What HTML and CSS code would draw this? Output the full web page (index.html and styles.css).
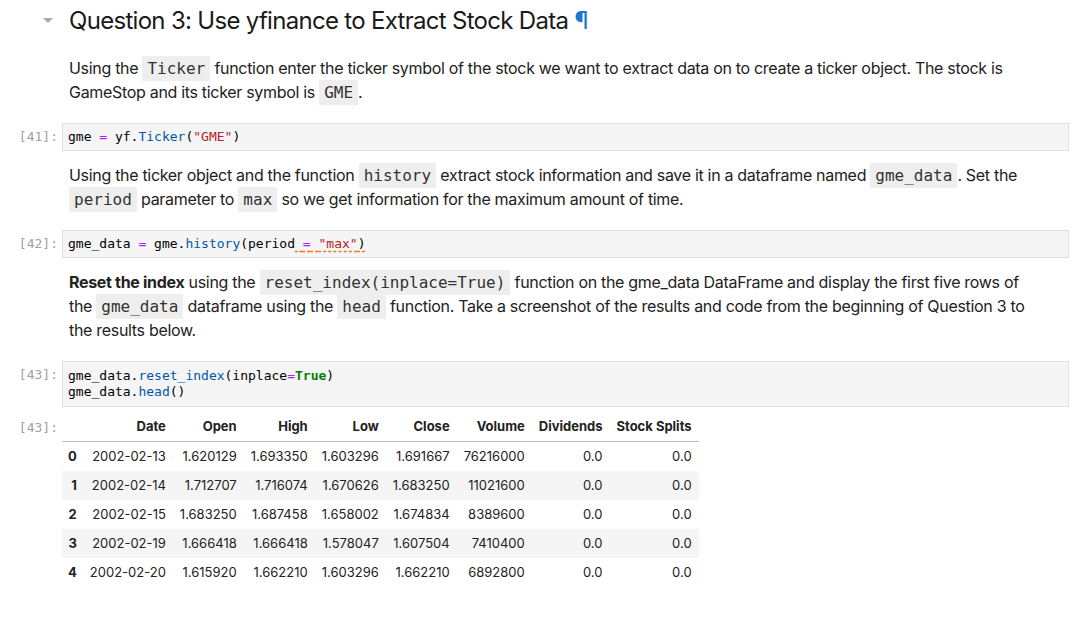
FILE: index.html
```html
<!DOCTYPE html>
<html>
<head>
<meta charset="utf-8">
<link rel="stylesheet" href="styles.css">
</head>
<body>
<div class="notebook">
  <div class="cell md heading-cell">
    <div class="prompt"><span class="caret"></span></div>
    <div class="md-body">
      <h2>Question 3: Use yfinance to Extract Stock Data <span class="anchor">¶</span></h2>
    </div>
  </div>

  <div class="cell md">
    <div class="prompt"></div>
    <div class="md-body">
      <p>Using the <code>Ticker</code> function enter the ticker symbol of the stock we want to extract data on to create a ticker object. The stock is GameStop and its ticker symbol is <code>GME</code>.</p>
    </div>
  </div>

  <div class="cell code">
    <div class="prompt">[41]:</div>
    <div class="input"><pre>gme <span class="o">=</span> yf.<span class="f">Ticker</span>(<span class="s">"GME"</span>)</pre></div>
  </div>

  <div class="cell md">
    <div class="prompt"></div>
    <div class="md-body">
      <p>Using the ticker object and the function <code>history</code> extract stock information and save it in a dataframe named <code>gme_data</code>. Set the <code>period</code> parameter to <code>max</code> so we get information for the maximum amount of time.</p>
    </div>
  </div>

  <div class="cell code">
    <div class="prompt">[42]:</div>
    <div class="input"><pre>gme_data <span class="o">=</span> gme.<span class="f">history</span>(period<span class="lint"> <span class="o">=</span> <span class="s">"max"</span>)</span></pre></div>
  </div>

  <div class="cell md">
    <div class="prompt"></div>
    <div class="md-body">
      <p><b>Reset the index</b> using the <code>reset_index(inplace=True)</code> function on the gme_data DataFrame and display the first five rows of the <code>gme_data</code> dataframe using the <code>head</code> function. Take a screenshot of the results and code from the beginning of Question 3 to the results below.</p>
    </div>
  </div>

  <div class="cell code">
    <div class="prompt">[43]:</div>
    <div class="input tall"><pre>gme_data.<span class="f">reset_index</span>(inplace<span class="o">=</span><span class="k">True</span>)
gme_data.<span class="f">head</span>()</pre></div>
  </div>

  <div class="cell output">
    <div class="prompt">[43]:</div>
    <div class="out-body">
      <table class="df">
        <thead>
          <tr><th></th><th>Date</th><th>Open</th><th>High</th><th>Low</th><th>Close</th><th>Volume</th><th>Dividends</th><th>Stock Splits</th></tr>
        </thead>
        <tbody>
          <tr><th>0</th><td>2002-02-13</td><td>1.620129</td><td>1.693350</td><td>1.603296</td><td>1.691667</td><td>76216000</td><td>0.0</td><td>0.0</td></tr>
          <tr><th>1</th><td>2002-02-14</td><td>1.712707</td><td>1.716074</td><td>1.670626</td><td>1.683250</td><td>11021600</td><td>0.0</td><td>0.0</td></tr>
          <tr><th>2</th><td>2002-02-15</td><td>1.683250</td><td>1.687458</td><td>1.658002</td><td>1.674834</td><td>8389600</td><td>0.0</td><td>0.0</td></tr>
          <tr><th>3</th><td>2002-02-19</td><td>1.666418</td><td>1.666418</td><td>1.578047</td><td>1.607504</td><td>7410400</td><td>0.0</td><td>0.0</td></tr>
          <tr><th>4</th><td>2002-02-20</td><td>1.615920</td><td>1.662210</td><td>1.603296</td><td>1.662210</td><td>6892800</td><td>0.0</td><td>0.0</td></tr>
        </tbody>
      </table>
    </div>
  </div>
</div>
</body>
</html>
```

FILE: styles.css
```css
html, body {
  margin: 0;
  padding: 0;
  background: #ffffff;
}

body {
  font-family: Inter, "Noto Sans", "Liberation Sans", sans-serif;
  color: #212121;
}

.notebook {
  padding: 0 6px 0 0;
}

.cell {
  display: flex;
  align-items: flex-start;
}

.prompt {
  width: 62px;
  flex: none;
  padding-right: 4px;
  text-align: right;
  font-family: "DejaVu Sans Mono", "Liberation Mono", monospace;
  font-size: 13px;
  line-height: 16px;
  color: #a0a0a0;
  box-sizing: border-box;
}

.md-body {
  flex: 1;
  padding-left: 7px;
  padding-right: 40px;
}

.heading-cell {
  margin-top: 6px;
}

.heading-cell .prompt {
  position: relative;
  height: 30px;
}

.caret {
  position: absolute;
  left: 43px;
  top: 12px;
  width: 0;
  height: 0;
  border-left: 5px solid transparent;
  border-right: 5px solid transparent;
  border-top: 5px solid #a8a8a8;
}

h2 {
  margin: 0;
  font-size: 24px;
  font-weight: 400;
  line-height: 30px;
  color: #1a1a1a;
  letter-spacing: -0.7px;
}

.anchor {
  color: #1976d2;
}

p {
  margin: 0;
  font-size: 16px;
  line-height: 24px;
  letter-spacing: -0.31px;
  color: #222;
}

.md {
  margin-bottom: 19px;
}

.heading-cell {
  margin-bottom: 20px;
}

code {
  font-family: "DejaVu Sans Mono", "Liberation Mono", monospace;
  font-size: 16px;
  line-height: 16px;
  letter-spacing: 0;
  background: #eeeeee;
  padding: 3px 5px;
  color: #333;
}

.code {
  margin-bottom: 12px;
}

.code .prompt {
  padding-top: 6px;
}

.input {
  flex: 1;
  background: #f5f5f5;
  border: 1px solid #e0e0e0;
  padding: 5px 5px 5px 5px;
}

.input.tall {
  padding: 6px 5px 6px 5px;
}

pre {
  margin: 0;
  font-family: "DejaVu Sans Mono", "Liberation Mono", monospace;
  font-size: 13px;
  line-height: 16px;
  color: #000;
}

.o { color: #aa22ff; }
.f { color: #0055aa; }
.s { color: #ba2121; }
.k { color: #008000; font-weight: bold; }
.lint {
  text-decoration: underline dashed #f07a2a;
  text-underline-offset: 3px;
}

.output {
  margin-top: -7px;
}

.output .prompt {
  padding-top: 7px;
  line-height: 17px;
}

.out-body {
  flex: 1;
}

.df {
  border-collapse: collapse;
  font-family: Inter, "Noto Sans", "Liberation Sans", sans-serif;
  font-size: 13px;
  color: #222;
}

.df th, .df td {
  padding: 6px 7px;
  line-height: 17px;
  text-align: right;
  white-space: nowrap;
}

.df thead th {
  font-weight: 700;
  border-bottom: 1px solid #bdbdbd;
}

.df tbody th {
  font-weight: 700;
  padding-left: 6px;
  padding-right: 6px;
}

.df tbody tr:nth-child(even) {
  background: #f5f5f5;
}
```
